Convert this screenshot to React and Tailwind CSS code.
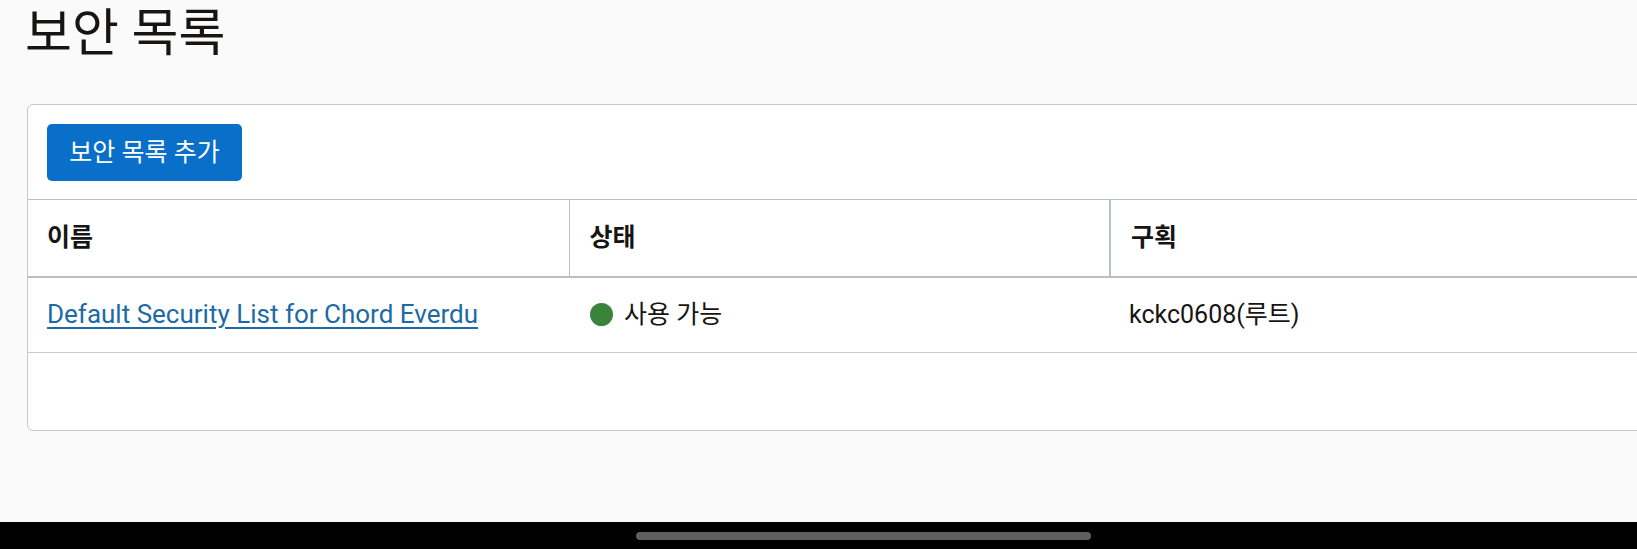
import React from "react";

export default function App() {
  const rows = [
    {
      name: "Default Security List for Chord Everdu",
      status: "사용 가능",
      compartment: "kckc0608(루트)",
    },
  ];

  return (
    <div className="w-[1637px] h-[549px] flex flex-col bg-[#fafafa] text-[#161513] overflow-hidden font-['Roboto','Noto_Sans_CJK_KR',sans-serif]">
      <div className="flex-1 overflow-hidden">
        {/* page title */}
        <h1 className="pl-[25px] pt-[4px] text-[51px] leading-[60px] font-normal">보안 목록</h1>

        {/* security list card */}
        <div className="ml-[27px] mt-[40px] w-[1660px] bg-white border border-[#c6c9cc] rounded-[6px]">
          <div className="px-[19px] pt-[19px] pb-[18px]">
            <button className="h-[57px] w-[195px] rounded-[5px] bg-[#0a6fc9] text-white text-[25px]">
              보안 목록 추가
            </button>
          </div>

          <table className="w-full table-fixed border-collapse">
            <thead>
              <tr className="h-[77px] border-t border-[#b9bfc3] border-b-2 border-b-[#b9bfc3]">
                <th className="w-[541px] px-[19px] text-left text-[25px] font-bold">이름</th>
                <th className="w-[541px] px-[20px] text-left text-[25px] font-bold border-l border-[#b9bfc3]">
                  상태
                </th>
                <th className="px-[20px] text-left text-[25px] font-bold border-l-2 border-[#b9bfc3]">
                  구획
                </th>
              </tr>
            </thead>
            <tbody>
              {rows.map((row, index) => (
                <tr key={index} className="h-[76px] border-b border-[#c9cccf]">
                  <td className="px-[19px] text-[26px]">
                    <a href="#" className="text-[#1d6aa6] underline underline-offset-[4px]">
                      {row.name}
                    </a>
                  </td>
                  <td className="px-[21px] text-[25px]">
                    <div className="flex items-center gap-[11px]">
                      <span className="w-[23px] h-[23px] rounded-full bg-[#3a833a]" />
                      <span>{row.status}</span>
                    </div>
                  </td>
                  <td className="px-[19px] text-[25px]">{row.compartment}</td>
                </tr>
              ))}
              <tr className="h-[77px]">
                <td colSpan={3}></td>
              </tr>
            </tbody>
          </table>
        </div>
      </div>

      {/* android navigation bar */}
      <div className="h-[27px] bg-black flex items-center pl-[636px]">
        <div className="w-[455px] h-[8px] rounded-full bg-[#5f5f5f]" />
      </div>
    </div>
  );
}
